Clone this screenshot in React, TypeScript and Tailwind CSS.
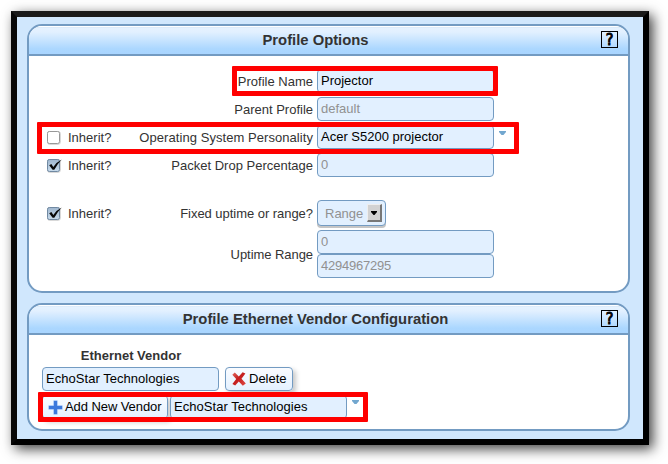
import React from "react";

const field =
  "box-border h-[24px] w-[177px] shrink-0 rounded-[4px] border border-[#739bc2] bg-[#e2f0ff] px-[3px] text-[13px] leading-[21px] whitespace-nowrap";

function Field({
  value,
  disabled = false,
  spacing = "",
}: {
  value: string;
  disabled?: boolean;
  spacing?: string;
}) {
  return <div className={field + (disabled ? " text-[#919191] " : " text-black ") + spacing}>{value}</div>;
}

function Check({ checked }: { checked: boolean }) {
  return (
    <svg width="16" height="15" viewBox="0 0 16 15" className="block shrink-0">
      <defs>
        <linearGradient id="box" x1="0" y1="0" x2="0" y2="1">
          <stop offset="0" stopColor="#9fb6ce" />
          <stop offset="1" stopColor="#c9dcec" />
        </linearGradient>
      </defs>
      <rect x="0.5" y="1.5" width="12.8" height="12.8" rx="2" fill="none" stroke="#d0d0d0" />
      <rect
        x="0.5"
        y="1.5"
        width="12"
        height="12"
        rx="1.8"
        fill={checked ? "url(#box)" : "#fff"}
        stroke={checked ? "#7089a2" : "#989898"}
      />
      {checked && (
        <path d="M2.2 7.2 L4.4 6 L6.3 9 Q9.5 4.2 14.8 1.6 Q10.3 6 7.3 11.8 L5.6 11.8 Z" fill="#080808" />
      )}
    </svg>
  );
}

function Row({
  label,
  inherit,
  height = "h-[28px]",
  spacing = "",
  children,
}: {
  label: string;
  inherit?: boolean;
  height?: string;
  spacing?: string;
  children: React.ReactNode;
}) {
  return (
    <div className={"flex items-center " + height}>
      <div className="flex w-[85px] shrink-0 items-center pl-[18px]">
        {inherit !== undefined && (
          <>
            <Check checked={inherit} />
            <span className="ml-[5px] pt-[2px]">Inherit?</span>
          </>
        )}
      </div>
      <div className={"mr-[4px] w-[199px] shrink-0 pt-[2px] text-right whitespace-nowrap " + spacing}>{label}</div>
      {children}
    </div>
  );
}

function Panel({ title, height, children }: { title: string; height: string; children: React.ReactNode }) {
  return (
    <section className={"box-border overflow-hidden rounded-[15px] border-2 border-[#739bc2] bg-white " + height}>
      <header className="flex h-[30px] items-center border-b-2 border-[#739bc2] bg-[linear-gradient(180deg,#ffffff_0px,#ffffff_1px,#d4e5f6_1px,#e5f2ff_2px,#e2f0ff_6px,#abd7ff_23px,#a9d5ff_28px)] pr-[10px]">
        <h2 className="flex-1 pl-px text-center text-[14.8px] leading-[28px] font-bold text-[#333]">{title}</h2>
        <span className="mt-[-2px] flex h-[17px] w-[17px] items-center justify-center border border-black font-['DejaVu_Sans_Condensed','DejaVu_Sans',sans-serif] text-[16px] leading-[15px] font-medium text-black [-webkit-text-stroke:0.9px_#000]">
          ?
        </span>
      </header>
      {children}
    </section>
  );
}

function Arrow({ offset }: { offset: string }) {
  return (
    <svg width="7" height="4" viewBox="0 0 7 4" className={"ml-[5px] shrink-0 " + offset}>
      <path d="M0 0H7V1L4.5 4H2.5L0 1Z" fill="#72a7cf" />
    </svg>
  );
}

const button =
  "box-border flex h-[24px] shrink-0 items-center rounded-[4px] border border-[#739bc2] bg-[linear-gradient(#fafcff,#e4f1ff)] text-[13px] leading-[22px] whitespace-nowrap text-black shadow-[3px_3px_5px_rgba(0,0,0,0.22)]";

export default function App() {
  return (
    <div className="relative h-[464px] w-[668px] overflow-hidden bg-white p-[11px] font-['Liberation_Sans',Arial,sans-serif] text-[13px] leading-[16px] text-[#333]">
      <main className="box-border flex h-[434px] w-[638px] flex-col gap-[10px] border-[6px] border-t-[#1a1a1a] border-r-black border-b-black border-l-[#080808] bg-[#d0e7fd] pt-[7px] pr-[13px] pl-[10px] shadow-[4px_4px_12px_rgba(0,0,0,0.75)]">
        <Panel title="Profile Options" height="h-[269px]">
          <div className="pt-[11px]">
            <Row label="Profile Name">
              <Field value="Projector" />
            </Row>
            <Row label="Parent Profile">
              <Field value="default" disabled />
            </Row>
            <Row label="Operating System Personality" inherit={false} spacing="tracking-[0.06px]">
              <Field value="Acer S5200 projector" />
              <Arrow offset="mb-[8px]" />
            </Row>
            <Row label="Packet Drop Percentage" inherit={true}>
              <Field value="0" disabled />
            </Row>
            <div className="h-[20px]" />
            <Row label="Fixed uptime or range?" inherit={true} spacing="tracking-[-0.04px]">
              <div className="box-border flex h-[26px] w-[69px] items-center rounded-[4px] border border-[#739bc2] bg-[#e2f0ff] pl-[7px] text-[#919191] shadow-[0_2px_0_#c5c5c5]">
                <span className="w-[39px] pt-px">Range</span>
                <span className="ml-[3px] flex h-[18px] w-[15px] items-center justify-center border-t border-r-2 border-b-2 border-l border-t-[#eee] border-r-[#777] border-b-[#777] border-l-[#eee] bg-[#d2d2d2]">
                  <svg width="6" height="4" viewBox="0 0 6 4" className="block">
                    <path d="M0 0H6V1L3.5 4H2.5L0 1Z" fill="#000" />
                  </svg>
                </span>
              </div>
            </Row>
            <div className="h-[3px]" />
            <Row label="Uptime Range" height="h-[48px]" spacing="tracking-[-0.06px]">
              <div className="flex flex-col">
                <Field value="0" disabled />
                <Field value="4294967295" disabled spacing="tracking-[-0.23px]" />
              </div>
            </Row>
          </div>
        </Panel>
        <Panel title="Profile Ethernet Vendor Configuration" height="h-[128px]">
          <div className="flex flex-col pt-[13px] pl-[13px]">
            <div className="mb-[3px] w-[177px] pl-px text-center text-[13px] leading-[16px] font-bold">Ethernet Vendor</div>
            <div className="mb-[4px] flex items-center gap-[6px]">
              <Field value="EchoStar Technologies" spacing="tracking-[0.04px]" />
              <div className={button + " w-[68px] pl-[7px]"}>
                <svg width="14" height="14" viewBox="0 0 14 14" className="mr-[2px] -ml-px shrink-0">
                  <defs>
                    <linearGradient id="cross" x1="0" y1="0" x2="1" y2="1">
                      <stop offset="0" stopColor="#e36a62" />
                      <stop offset="0.45" stopColor="#c41d1d" />
                      <stop offset="1" stopColor="#e04a44" />
                    </linearGradient>
                  </defs>
                  <path
                    d="M0.3 2.7 L2.8 0.5 L6.8 4.4 L10.6 0.3 L13.4 1.6 L9.5 6.7 L13.8 11.4 L10.8 13.7 L6.8 9.6 L3.2 13.6 L0.4 12 L4.2 7.1 Z"
                    fill="url(#cross)"
                  />
                </svg>
                <span className="ml-px">Delete</span>
              </div>
            </div>
            <div className="flex items-center">
              <div className={button + " mr-[2px] w-[126px] pl-[5px] tracking-[-0.08px]"}>
                <svg width="15" height="15" viewBox="0 0 15 15" className="mr-[2px] shrink-0">
                  <path d="M5.5 0.5h4v5h5v4h-5v5h-4v-5h-5v-4h5z" fill="#74a4ef" />
                  <path d="M6 1h3v5h5v3h-5v5h-3v-5h-5v-3h5z" fill="#3c78dc" />
                </svg>
                Add New Vendor
              </div>
              <Field value="EchoStar Technologies" spacing="tracking-[0.04px]" />
              <Arrow offset="mb-[10px]" />
            </div>
          </div>
        </Panel>
      </main>
      <div className="absolute top-[66px] left-[232px] h-[30px] w-[266px] rounded-[1px] border-[5px] border-[#f00]" />
      <div className="absolute top-[122px] left-[37px] h-[32px] w-[482px] rounded-[1px] border-[5px] border-[#f00]" />
      <div className="absolute top-[392px] left-[38px] h-[30px] w-[330px] rounded-[1px] border-[5px] border-[#f00]" />
    </div>
  );
}
